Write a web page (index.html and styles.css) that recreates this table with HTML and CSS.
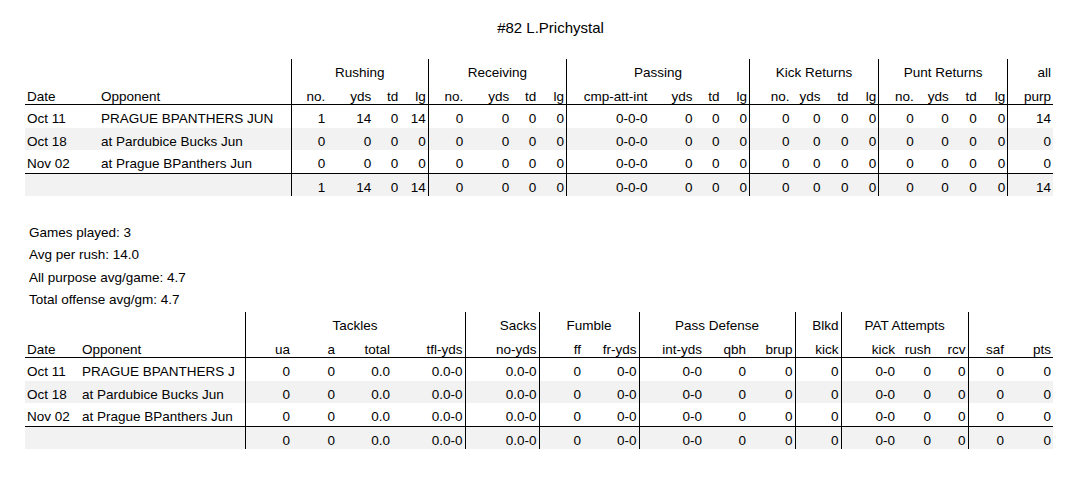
FILE: index.html
```html
<!DOCTYPE html>
<html lang="en">
<head>
<meta charset="utf-8">
<title>#82 L.Prichystal</title>
<link rel="stylesheet" href="styles.css">
</head>
<body>
<div class="page">
  <h1 class="title">#82 L.Prichystal</h1>

  <table class="grid offense">
    <colgroup>
      <col class="off-date"><col class="off-opp">
      <col class="c36"><col class="c46"><col class="c27"><col class="c28">
      <col class="c37"><col class="c46"><col class="c27"><col class="c28">
      <col class="c83"><col class="c45"><col class="c27"><col class="c28">
      <col class="c42"><col class="c31"><col class="c28"><col class="c28">
      <col class="c37"><col class="c35"><col class="c28"><col class="c29">
      <col class="c45">
    </colgroup>
    <thead>
      <tr class="groups">
        <th colspan="2" class="end"></th>
        <th colspan="4" class="end mid">Rushing</th>
        <th colspan="4" class="end mid">Receiving</th>
        <th colspan="4" class="end mid">Passing</th>
        <th colspan="4" class="end mid">Kick Returns</th>
        <th colspan="4" class="end mid">Punt Returns</th>
        <th>all</th>
      </tr>
      <tr class="heads">
        <th class="left">Date</th><th class="left end">Opponent</th>
        <th>no.</th><th>yds</th><th>td</th><th class="end">lg</th>
        <th>no.</th><th>yds</th><th>td</th><th class="end">lg</th>
        <th>cmp-att-int</th><th>yds</th><th>td</th><th class="end">lg</th>
        <th>no.</th><th>yds</th><th>td</th><th class="end">lg</th>
        <th>no.</th><th>yds</th><th>td</th><th class="end">lg</th>
        <th>purp</th>
      </tr>
    </thead>
    <tbody>
      <tr>
        <td class="left">Oct 11</td><td class="left end">PRAGUE BPANTHERS JUN</td>
        <td>1</td><td>14</td><td>0</td><td class="end">14</td>
        <td>0</td><td>0</td><td>0</td><td class="end">0</td>
        <td>0-0-0</td><td>0</td><td>0</td><td class="end">0</td>
        <td>0</td><td>0</td><td>0</td><td class="end">0</td>
        <td>0</td><td>0</td><td>0</td><td class="end">0</td>
        <td>14</td>
      </tr>
      <tr class="alt">
        <td class="left">Oct 18</td><td class="left end">at Pardubice Bucks Jun</td>
        <td>0</td><td>0</td><td>0</td><td class="end">0</td>
        <td>0</td><td>0</td><td>0</td><td class="end">0</td>
        <td>0-0-0</td><td>0</td><td>0</td><td class="end">0</td>
        <td>0</td><td>0</td><td>0</td><td class="end">0</td>
        <td>0</td><td>0</td><td>0</td><td class="end">0</td>
        <td>0</td>
      </tr>
      <tr>
        <td class="left">Nov 02</td><td class="left end">at Prague BPanthers Jun</td>
        <td>0</td><td>0</td><td>0</td><td class="end">0</td>
        <td>0</td><td>0</td><td>0</td><td class="end">0</td>
        <td>0-0-0</td><td>0</td><td>0</td><td class="end">0</td>
        <td>0</td><td>0</td><td>0</td><td class="end">0</td>
        <td>0</td><td>0</td><td>0</td><td class="end">0</td>
        <td>0</td>
      </tr>
    </tbody>
    <tfoot>
      <tr class="total">
        <td class="left"></td><td class="left end"></td>
        <td>1</td><td>14</td><td>0</td><td class="end">14</td>
        <td>0</td><td>0</td><td>0</td><td class="end">0</td>
        <td>0-0-0</td><td>0</td><td>0</td><td class="end">0</td>
        <td>0</td><td>0</td><td>0</td><td class="end">0</td>
        <td>0</td><td>0</td><td>0</td><td class="end">0</td>
        <td>14</td>
      </tr>
    </tfoot>
  </table>

  <div class="summary">
    <p>Games played: 3</p>
    <p>Avg per rush: 14.0</p>
    <p>All purpose avg/game: 4.7</p>
    <p>Total offense avg/gm: 4.7</p>
  </div>

  <table class="grid defense">
    <colgroup>
      <col class="c55"><col class="def-opp">
      <col class="c47"><col class="c45"><col class="c55"><col class="c73">
      <col class="c74">
      <col class="c44"><col class="c56">
      <col class="c65"><col class="c44"><col class="c47">
      <col class="c46">
      <col class="c56"><col class="c36"><col class="c35">
      <col class="c38"><col class="c47">
    </colgroup>
    <thead>
      <tr class="groups">
        <th colspan="2" class="end"></th>
        <th colspan="4" class="end mid">Tackles</th>
        <th class="end">Sacks</th>
        <th colspan="2" class="end mid">Fumble</th>
        <th colspan="3" class="end mid">Pass Defense</th>
        <th class="end">Blkd</th>
        <th colspan="3" class="end mid">PAT Attempts</th>
        <th colspan="2"></th>
      </tr>
      <tr class="heads">
        <th class="left">Date</th><th class="left end">Opponent</th>
        <th>ua</th><th>a</th><th>total</th><th class="end">tfl-yds</th>
        <th class="end">no-yds</th>
        <th>ff</th><th class="end">fr-yds</th>
        <th>int-yds</th><th>qbh</th><th class="end">brup</th>
        <th class="end">kick</th>
        <th>kick</th><th>rush</th><th class="end">rcv</th>
        <th>saf</th><th>pts</th>
      </tr>
    </thead>
    <tbody>
      <tr>
        <td class="left">Oct 11</td><td class="left end">PRAGUE BPANTHERS J</td>
        <td>0</td><td>0</td><td>0.0</td><td class="end">0.0-0</td>
        <td class="end">0.0-0</td>
        <td>0</td><td class="end">0-0</td>
        <td>0-0</td><td>0</td><td class="end">0</td>
        <td class="end">0</td>
        <td>0-0</td><td>0</td><td class="end">0</td>
        <td>0</td><td>0</td>
      </tr>
      <tr class="alt">
        <td class="left">Oct 18</td><td class="left end">at Pardubice Bucks Jun</td>
        <td>0</td><td>0</td><td>0.0</td><td class="end">0.0-0</td>
        <td class="end">0.0-0</td>
        <td>0</td><td class="end">0-0</td>
        <td>0-0</td><td>0</td><td class="end">0</td>
        <td class="end">0</td>
        <td>0-0</td><td>0</td><td class="end">0</td>
        <td>0</td><td>0</td>
      </tr>
      <tr>
        <td class="left">Nov 02</td><td class="left end">at Prague BPanthers Jun</td>
        <td>0</td><td>0</td><td>0.0</td><td class="end">0.0-0</td>
        <td class="end">0.0-0</td>
        <td>0</td><td class="end">0-0</td>
        <td>0-0</td><td>0</td><td class="end">0</td>
        <td class="end">0</td>
        <td>0-0</td><td>0</td><td class="end">0</td>
        <td>0</td><td>0</td>
      </tr>
    </tbody>
    <tfoot>
      <tr class="total">
        <td class="left"></td><td class="left end"></td>
        <td>0</td><td>0</td><td>0.0</td><td class="end">0.0-0</td>
        <td class="end">0.0-0</td>
        <td>0</td><td class="end">0-0</td>
        <td>0-0</td><td>0</td><td class="end">0</td>
        <td class="end">0</td>
        <td>0-0</td><td>0</td><td class="end">0</td>
        <td>0</td><td>0</td>
      </tr>
    </tfoot>
  </table>
</div>
</body>
</html>
```
FILE: styles.css
```css
html, body {
  margin: 0;
  padding: 0;
  background: #ffffff;
}

body {
  color: #000000;
  font-family: "Liberation Sans", Arial, sans-serif;
  font-size: 13.5px;
}

.page {
  padding: 0 21px 0 25px;
}

.title {
  margin: 19.4px 0 0;
  padding-left: 23px;
  text-align: center;
  font-size: 15px;
  line-height: 17px;
  font-weight: normal;
}

.grid {
  width: 1028px;
  table-layout: fixed;
  border-collapse: collapse;
  border-spacing: 0;
}

.offense {
  margin-top: 22.6px;
}

.grid th,
.grid td {
  padding: 6px 2px 1.67px;
  line-height: 15px;
  font-weight: normal;
  text-align: right;
  white-space: nowrap;
  overflow: hidden;
}

.grid .groups th {
  padding: 6px 2px 2px;
}

.grid .groups th.mid {
  text-align: center;
}

.grid .heads th {
  padding: 7px 2px 0;
  border-bottom: 1px solid #000000;
}

.grid .left {
  text-align: left;
}

.grid .end {
  border-right: 1px solid #000000;
}

.grid .alt td {
  background: #f2f2f2;
}

.grid .total td {
  background: #f2f2f2;
  border-top: 1px solid #000000;
  padding: 6px 2px 1.5px;
}

.c27 { width: 27px; }
.c28 { width: 28px; }
.c29 { width: 29px; }
.c31 { width: 31px; }
.c35 { width: 35px; }
.c36 { width: 36px; }
.c37 { width: 37px; }
.c38 { width: 38px; }
.c42 { width: 42px; }
.c44 { width: 44px; }
.c45 { width: 45px; }
.c46 { width: 46px; }
.c47 { width: 47px; }
.c55 { width: 55px; }
.c56 { width: 56px; }
.c65 { width: 65px; }
.c73 { width: 73px; }
.c74 { width: 74px; }
.c83 { width: 83px; }

.off-date { width: 74px; }
.off-opp { width: 192px; }
.def-opp { width: 165px; }

.summary {
  margin-top: 25.4px;
  padding-left: 4px;
}

.summary p {
  margin: 0;
  line-height: 22.5px;
}
```
